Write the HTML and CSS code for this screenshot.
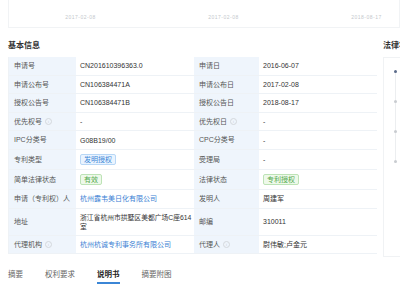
FILE: index.html
```html
<!doctype html>
<html>
    <head>
        <title>专利详情</title>
        <link rel="stylesheet" href="styles.css">
    </head>
    <body>
        <div class="top-card">
            <div class="top-cell">2017-02-08</div>
            <div class="top-cell">2017-02-08</div>
            <div class="top-cell">2018-08-17</div>
        </div>
        <div class="layout">
            <section class="main">
                <h2>基本信息</h2>
                <div class="info">
                    <div class="label">申请号</div>
                    <div class="value">CN201610396363.0</div>
                    <div class="label">申请日</div>
                    <div class="value">2016-06-07</div>

                    <div class="label">申请公布号</div>
                    <div class="value">CN106384471A</div>
                    <div class="label">申请公布日</div>
                    <div class="value">2017-02-08</div>

                    <div class="label">授权公告号</div>
                    <div class="value">CN106384471B</div>
                    <div class="label">授权公告日</div>
                    <div class="value">2018-08-17</div>

                    <div class="label">优先权号 <span class="tip">i</span></div>
                    <div class="value">-</div>
                    <div class="label">优先权日 <span class="tip">i</span></div>
                    <div class="value">-</div>

                    <div class="label">IPC分类号</div>
                    <div class="value">G08B19/00</div>
                    <div class="label">CPC分类号</div>
                    <div class="value">-</div>

                    <div class="label">专利类型</div>
                    <div class="value"><span class="tag blue">发明授权</span></div>
                    <div class="label">受理局</div>
                    <div class="value">-</div>

                    <div class="label">简单法律状态</div>
                    <div class="value"><span class="tag green">有效</span></div>
                    <div class="label">法律状态</div>
                    <div class="value"><span class="tag green">专利授权</span></div>

                    <div class="label">申请（专利权）人</div>
                    <div class="value"><a href="#">杭州露韦美日化有限公司</a></div>
                    <div class="label">发明人</div>
                    <div class="value">周建军</div>

                    <div class="label">地址</div>
                    <div class="value address">浙江省杭州市拱墅区美都广场C座614室</div>
                    <div class="label">邮编</div>
                    <div class="value">310011</div>

                    <div class="label">代理机构 <span class="tip">i</span></div>
                    <div class="value"><a href="#">杭州杭诚专利事务所有限公司</a></div>
                    <div class="label">代理人 <span class="tip">i</span></div>
                    <div class="value">尉伟敏;卢金元</div>
                </div>
                <nav class="tabs">
                    <span>摘要</span>
                    <span>权利要求</span>
                    <span class="active">说明书</span>
                    <span>摘要附图</span>
                </nav>
            </section>
            <aside class="side">
                <h2>法律状态</h2>
                <div class="timeline">
                    <div class="dot first"></div>
                    <div class="line"></div>
                    <div class="dot"></div>
                    <div class="line"></div>
                    <div class="dot"></div>
                    <div class="line"></div>
                    <div class="dot"></div>
                </div>
            </aside>
        </div>
    </body>
</html>
```

FILE: styles.css
```css
body {
    margin: 0;
    font-family: "Liberation Sans", "Noto Sans CJK SC", sans-serif;
    font-size: 7px;
    color: #333;
    background: #fff;
    overflow: hidden;
}

.top-card {
    display: grid;
    grid-template-columns: 143px 143px 143px;
    margin-left: 8px;
    height: 28px;
    border: 1px solid #f1f3f5;
    border-top: none;
    box-sizing: border-box;
}

.top-cell {
    text-align: center;
    padding-top: 14px;
    font-size: 5px;
    color: #c4c8cc;
    letter-spacing: 0.5px;
}

.layout {
    display: flex;
    gap: 6px;
    padding-left: 8px;
}

.main {
    width: 369px;
    flex-shrink: 0;
}

h2 {
    font-size: 8px;
    font-weight: bold;
    color: #333;
    margin: 13px 0 6px;
    line-height: 10px;
    white-space: nowrap;
}

.info {
    display: grid;
    grid-template-columns: 67px 118px 65px 119px;
    background: #eef2f6;
    gap: 1px 0;
    border: 1px solid #eef2f6;
    border-top: none;
    box-sizing: border-box;
}

.label {
    background: #eff5fc;
    color: #555;
    padding: 4px 5px;
    min-height: 9.6px;
    line-height: 9.6px;
    display: flex;
    align-items: center;
    white-space: nowrap;
}

.value {
    background: #fff;
    padding: 4px 1px 4px 4px;
    line-height: 9px;
    display: flex;
    align-items: center;
}

.address {
    font-size: 6.8px;
}

.tip {
    display: inline-block;
    width: 5px;
    height: 5px;
    margin-left: 3px;
    border: 1px solid #d4d8dc;
    border-radius: 50%;
    font-size: 4px;
    line-height: 5px;
    text-align: center;
    color: #c8ccd0;
}

.tag {
    display: inline-block;
    padding: 0 3px;
    border-radius: 2px;
    line-height: 9px;
}

.blue {
    color: #3b86d6;
    background: #eaf4ff;
    border: 1px solid #b8d7f6;
}

.green {
    color: #52a84a;
    background: #eef9ea;
    border: 1px solid #bde3b6;
}

a {
    color: #3b7fd4;
    text-decoration: none;
}

.tabs {
    display: flex;
    gap: 22px;
    margin-top: 14px;
    font-size: 7.5px;
    color: #666;
}

.tabs span {
    padding-bottom: 3px;
}

.tabs .active {
    color: #222;
    font-weight: bold;
    border-bottom: 2px solid #3b86d6;
}

.side {
    width: 40px;
    flex-shrink: 0;
}

.timeline {
    border: 1px solid #f0f2f4;
    border-right: none;
    height: 200px;
    padding: 12px 0 0 10px;
    box-sizing: border-box;
}

.dot {
    width: 3px;
    height: 3px;
    border-radius: 50%;
    background: #c8ccd0;
}

.dot.first {
    background: #5b6b8a;
}

.line {
    width: 1px;
    height: 27px;
    margin-left: 1px;
    background: #eceef0;
}
```
